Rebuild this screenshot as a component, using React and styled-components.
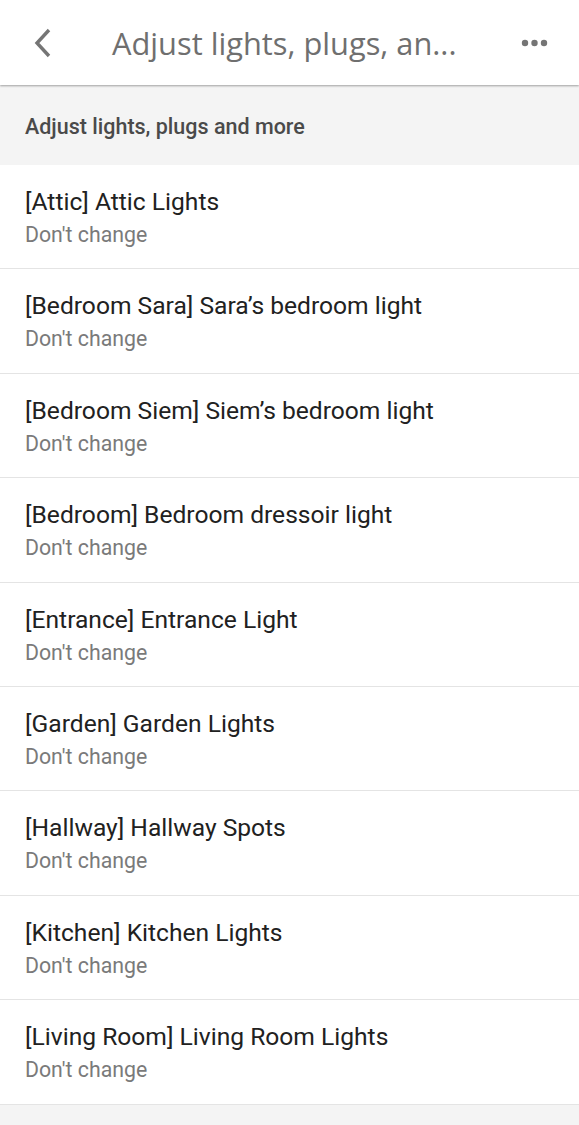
import React from "react";
import styled, { createGlobalStyle } from "styled-components";

const GlobalStyle = createGlobalStyle`
  html, body {
    margin: 0;
    padding: 0;
    background: #f4f4f4;
    font-family: Roboto, "Liberation Sans", sans-serif;
  }
`;

const Page = styled.div`
  width: 579px;
  min-height: 1125px;
  background: #f4f4f4;
`;

const TopBar = styled.header`
  position: relative;
  z-index: 1;
  height: 85px;
  display: flex;
  align-items: center;
  background: #fff;
  box-shadow: 0 1px 2px rgba(0, 0, 0, 0.35);
`;

const IconButton = styled.button`
  display: flex;
  align-items: center;
  justify-content: center;
  width: ${(p) => p.$w}px;
  height: 85px;
  padding: 0;
  border: none;
  background: none;
  color: #757575;
`;

const BackButton = styled(IconButton)`
  justify-content: flex-start;
  padding-left: 33px;
  box-sizing: border-box;
`;

const Title = styled.h1`
  flex: 1;
  margin: 0;
  font-family: "Open Sans", Roboto, sans-serif;
  font-size: 30.8px;
  font-weight: 400;
  color: #6f6f6f;
  white-space: nowrap;
`;

const SectionLabel = styled.div`
  height: 80px;
  display: flex;
  align-items: center;
  padding: 3px 25px 0;
  box-sizing: border-box;
  font-size: 21.5px;
  font-weight: 500;
  color: #4a4a4a;
`;

const List = styled.ul`
  margin: 0;
  padding: 0;
  list-style: none;
  background: #fff;
`;

const Row = styled.li`
  box-sizing: border-box;
  height: 104.4px;
  padding: 21px 25px 0;
  border-bottom: 1px solid #e4e4e4;
`;

const RowTitle = styled.div`
  font-size: 24.6px;
  line-height: 32px;
  color: #212121;
`;

const RowSub = styled.div`
  margin-top: 3px;
  font-size: 21.3px;
  line-height: 28px;
  color: #7a7a7a;
`;

const devices = [
  "[Attic] Attic Lights",
  "[Bedroom Sara] Sara\u2019s bedroom light",
  "[Bedroom Siem] Siem\u2019s bedroom light",
  "[Bedroom] Bedroom dressoir light",
  "[Entrance] Entrance Light",
  "[Garden] Garden Lights",
  "[Hallway] Hallway Spots",
  "[Kitchen] Kitchen Lights",
  "[Living Room] Living Room Lights",
];

const BackIcon = () => (
  <svg width="20" height="32" viewBox="0 0 20 32">
    <path d="M16 3 L4 16 L16 29" fill="none" stroke="currentColor" strokeWidth="3.4" />
  </svg>
);

const MoreIcon = () => (
  <svg width="28" height="8" viewBox="0 0 28 8">
    <circle cx="4" cy="4" r="3.2" fill="currentColor" />
    <circle cx="13.5" cy="4" r="3.2" fill="currentColor" />
    <circle cx="23" cy="4" r="3.2" fill="currentColor" />
  </svg>
);

export default function App() {
  return (
    <Page>
      <GlobalStyle />
      <TopBar>
        <BackButton $w={112} aria-label="Back">
          <BackIcon />
        </BackButton>
        <Title>Adjust lights, plugs, an...</Title>
        <IconButton $w={88} aria-label="More">
          <MoreIcon />
        </IconButton>
      </TopBar>
      <SectionLabel>Adjust lights, plugs and more</SectionLabel>
      <List>
        {devices.map((name) => (
          <Row key={name}>
            <RowTitle>{name}</RowTitle>
            <RowSub>Don't change</RowSub>
          </Row>
        ))}
      </List>
    </Page>
  );
}
